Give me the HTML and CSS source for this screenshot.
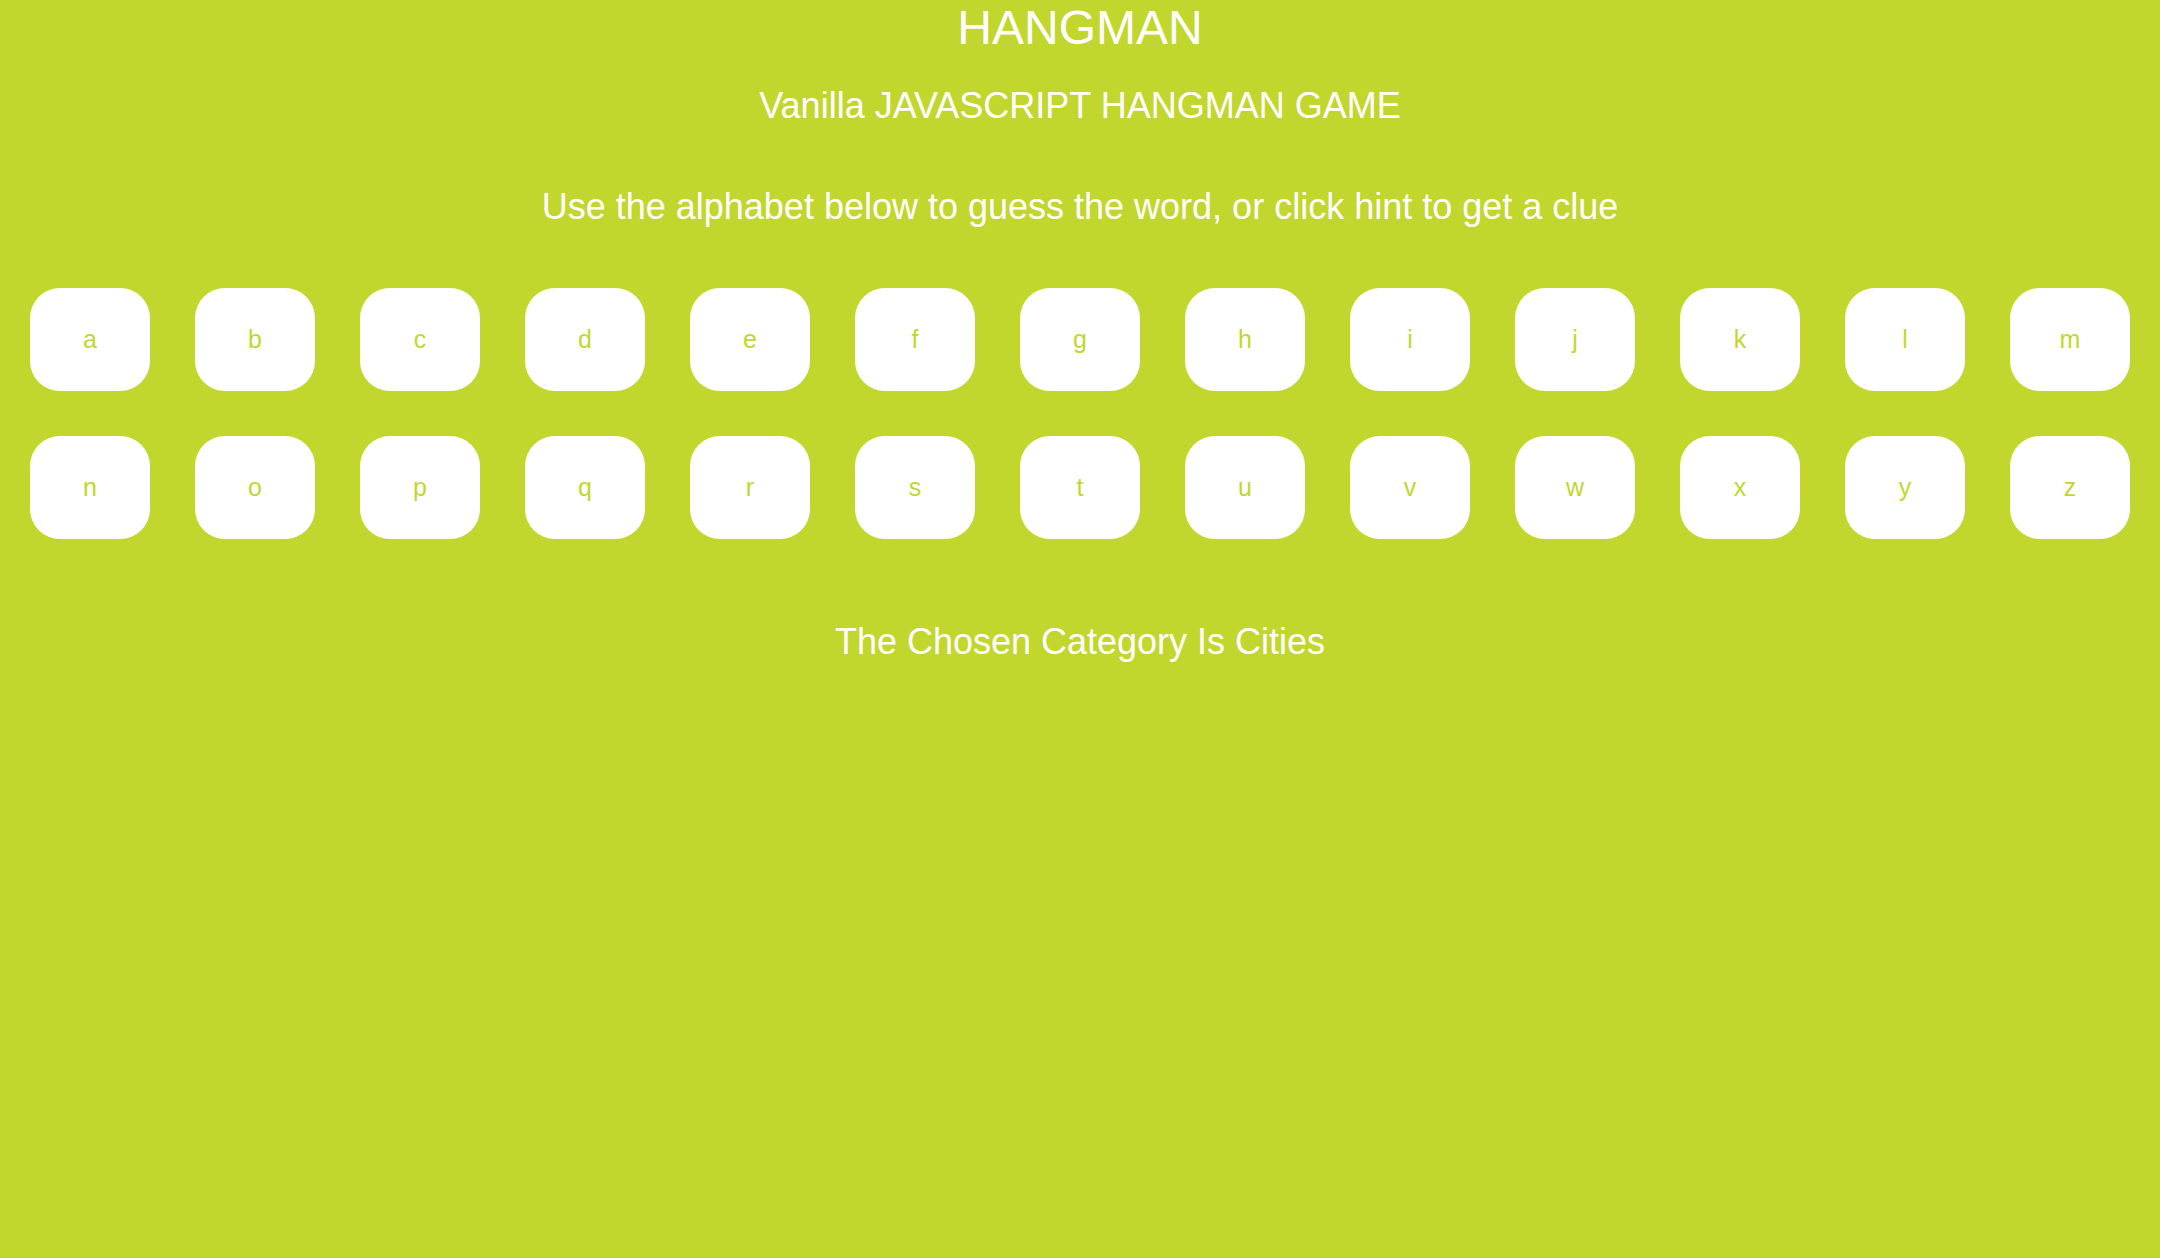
FILE: index.html
```html
<!DOCTYPE html>
<html lang="en">
<head>
<meta charset="utf-8">
<title>Hangman</title>
<link rel="stylesheet" href="styles.css">
</head>
<body>
<div class="wrapper">
  <h1 class="title">HANGMAN</h1>
  <h2 class="subtitle">Vanilla JAVASCRIPT HANGMAN GAME</h2>
  <p class="intro">Use the alphabet below to guess the word, or click hint to get a clue</p>
  <ul class="alphabet">
    <li class="key">a</li><li class="key">b</li><li class="key">c</li><li class="key">d</li><li class="key">e</li><li class="key">f</li><li class="key">g</li><li class="key">h</li><li class="key">i</li><li class="key">j</li><li class="key">k</li><li class="key">l</li><li class="key">m</li>
    <li class="key">n</li><li class="key">o</li><li class="key">p</li><li class="key">q</li><li class="key">r</li><li class="key">s</li><li class="key">t</li><li class="key">u</li><li class="key">v</li><li class="key">w</li><li class="key">x</li><li class="key">y</li><li class="key">z</li>
  </ul>
  <p class="category">The Chosen Category Is Cities</p>
</div>
</body>
</html>
```

FILE: styles.css
```css
html, body {
  margin: 0;
  padding: 0;
}

body {
  background-color: #c1d72e;
  color: #ffffff;
  font-family: "Liberation Sans", Arial, Helvetica, sans-serif;
  min-height: 1258px;
}

.wrapper {
  text-align: center;
}

.title {
  font-size: 48px;
  font-weight: normal;
  line-height: 55px;
  margin: 0;
}

.subtitle {
  font-size: 36px;
  font-weight: normal;
  line-height: 41px;
  margin: 30px 0 0;
}

.intro {
  font-size: 36px;
  line-height: 41px;
  margin: 60px 0 0;
}

.alphabet {
  list-style: none;
  padding: 0;
  margin: 61px auto 0;
  width: 2100px;
  display: flex;
  flex-wrap: wrap;
  column-gap: 45px;
  row-gap: 45px;
}

.key {
  width: 120px;
  height: 103px;
  background: #ffffff;
  color: #c1d72e;
  border-radius: 30px;
  display: flex;
  align-items: center;
  justify-content: center;
  font-size: 25px;
  cursor: pointer;
}

.category {
  font-size: 36px;
  line-height: 41px;
  margin: 82px 0 0;
}
```
